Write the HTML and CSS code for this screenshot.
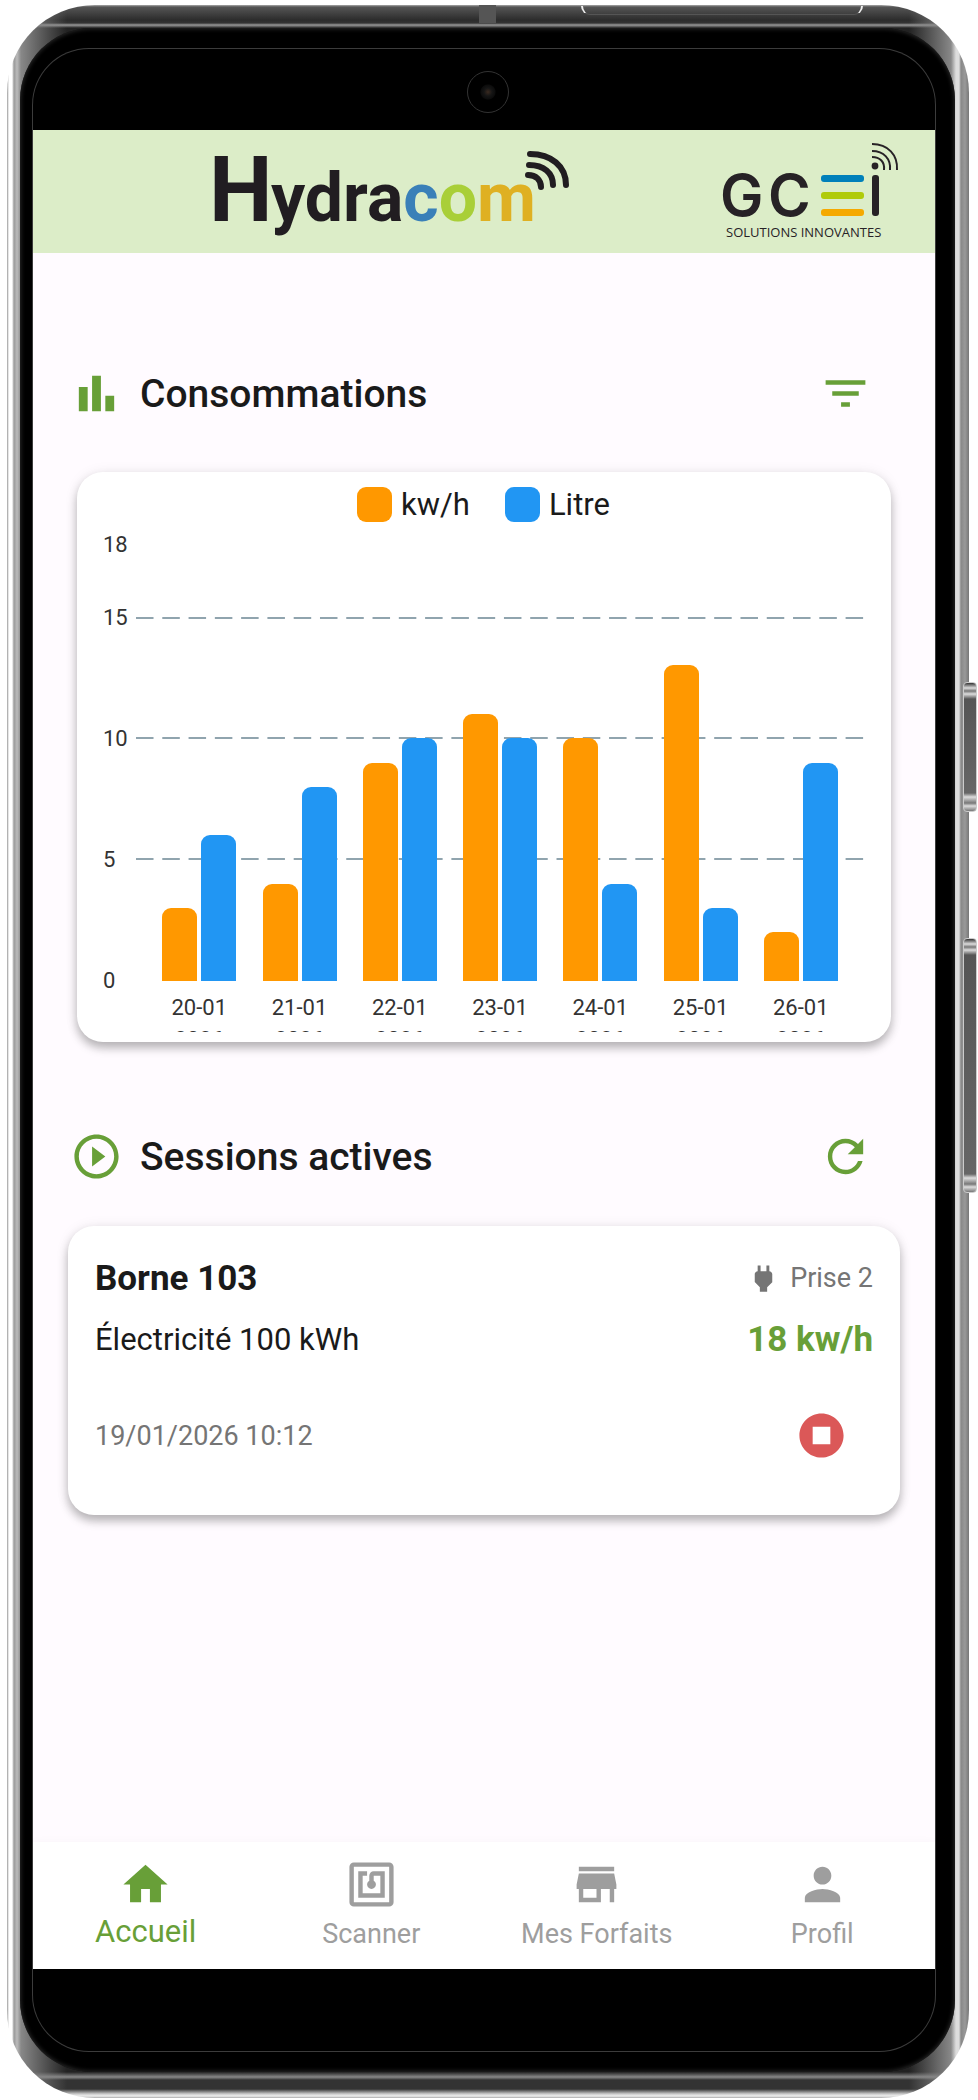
FILE: index.html
```html
<!DOCTYPE html>
<html lang="fr">
<head>
    <meta charset="UTF-8">
    <meta name="viewport" content="width=device-width, initial-scale=1.0">
    <title>Hydracom</title>
    <link rel="stylesheet" href="styles.css">
</head>
<body>
    <div class="phone">
        <span class="side-button power"></span>
        <span class="side-button volume"></span>
        <span class="antenna"></span>
        <span class="speaker"></span>
        <div class="bezel">
            <div class="glass">
                <div class="camera-area"><span class="camera"></span></div>

                <div class="screen">
                    <header class="app-header">
                        <svg class="logo-hydracom" width="360" height="100" viewBox="0 0 360 100" role="img" aria-label="Hydracom">
                            <text class="logo-cap" x="-1" y="79">H</text>
                            <text class="logo-word" x="61" y="79">ydra<tspan fill="#3a80b8">c</tspan><tspan fill="#a9cf38">o</tspan><tspan fill="#dfb022">m</tspan></text>
                            <g fill="none" stroke="#211d21" stroke-width="6" stroke-linecap="round">
                                <path d="M320 12c21 0 36 12 36 31"/>
                                <path d="M319 23c15 0 24 8 24 20"/>
                                <path d="M318 33c8 0 13 5 13 12"/>
                            </g>
                        </svg>
                        <svg class="logo-gcei" width="190" height="105" viewBox="0 0 190 105" role="img" aria-label="GCEi Solutions innovantes">
                            <text class="gcei-letters" y="77"><tspan x="5">G</tspan><tspan x="53">C</tspan></text>
                            <rect x="106" y="36" width="43" height="7" rx="3" fill="#0080ba"/>
                            <rect x="106" y="53" width="43" height="7" rx="3" fill="#b0cb0a"/>
                            <rect x="106" y="70" width="43" height="7" rx="3" fill="#f5a900"/>
                            <rect x="157" y="36" width="7" height="41" rx="3" fill="#272226"/>
                            <circle cx="160" cy="27" r="3.4" fill="#272226"/>
                            <g fill="none" stroke="#272226" stroke-width="2">
                                <path d="M157 18c8 0 13 5 12 13"/>
                                <path d="M157 12c12 0 19 8 18 19"/>
                                <path d="M157 5c16 0 26 11 25 26"/>
                            </g>
                            <text class="gcei-tagline" x="11" y="98">SOLUTIONS INNOVANTES</text>
                        </svg>
                    </header>

                    <main class="content">
                        <div class="section-head">
                            <svg class="icon" viewBox="0 0 24 24"><path d="M4 9h4v11H4zM16 13h4v7h-4zM10 4h4v16h-4z"/></svg>
                            <h2>Consommations</h2>
                            <button type="button" class="icon-button" aria-label="Filtrer">
                                <svg class="icon" viewBox="0 0 24 24"><path d="M10 18h4v-2h-4v2zM3 6v2h18V6H3zm3 7h12v-2H6v2z"/></svg>
                            </button>
                        </div>

                        <section class="card chart-card">
                            <div class="legend">
                                <span class="legend-item"><i class="swatch kwh"></i>kw/h</span>
                                <span class="legend-item"><i class="swatch litre"></i>Litre</span>
                            </div>
                            <div class="chart">
                                <div class="axis">
                                    <span style="flex-grow: 3">18</span>
                                    <span style="flex-grow: 5">15</span>
                                    <span style="flex-grow: 5">10</span>
                                    <span style="flex-grow: 5">5</span>
                                    <span>0</span>
                                </div>
                                <div class="plot">
                                    <div class="group"><div class="bar kwh" style="height: 16.67%"></div><div class="bar litre" style="height: 33.33%"></div></div>
                                    <div class="group"><div class="bar kwh" style="height: 22.22%"></div><div class="bar litre" style="height: 44.44%"></div></div>
                                    <div class="group"><div class="bar kwh" style="height: 50%"></div><div class="bar litre" style="height: 55.56%"></div></div>
                                    <div class="group"><div class="bar kwh" style="height: 61.11%"></div><div class="bar litre" style="height: 55.56%"></div></div>
                                    <div class="group"><div class="bar kwh" style="height: 55.56%"></div><div class="bar litre" style="height: 22.22%"></div></div>
                                    <div class="group"><div class="bar kwh" style="height: 72.22%"></div><div class="bar litre" style="height: 16.67%"></div></div>
                                    <div class="group"><div class="bar kwh" style="height: 11.11%"></div><div class="bar litre" style="height: 50%"></div></div>
                                </div>
                                <div class="dates">
                                    <span>20-01<br>2026</span>
                                    <span>21-01<br>2026</span>
                                    <span>22-01<br>2026</span>
                                    <span>23-01<br>2026</span>
                                    <span>24-01<br>2026</span>
                                    <span>25-01<br>2026</span>
                                    <span>26-01<br>2026</span>
                                </div>
                            </div>
                        </section>

                        <div class="section-head sessions-head">
                            <svg class="icon" viewBox="0 0 24 24"><path d="M10 16.500l6-4.500-6-4.500v9zM12 2C6.480 2 2 6.480 2 12s4.480 10 10 10 10-4.480 10-10S17.520 2 12 2zm0 18c-4.410 0-8-3.590-8-8s3.590-8 8-8 8 3.590 8 8-3.590 8-8 8z"/></svg>
                            <h2>Sessions actives</h2>
                            <button type="button" class="icon-button" aria-label="Actualiser">
                                <svg class="icon" viewBox="0 0 24 24"><path d="M17.650 6.350C16.200 4.900 14.210 4 12 4c-4.420 0-7.990 3.580-7.990 8s3.570 8 7.990 8c3.730 0 6.840-2.550 7.730-6h-2.080c-.82 2.330-3.040 4-5.650 4-3.310 0-6-2.690-6-6s2.690-6 6-6c1.660 0 3.140.69 4.220 1.780L13 11h7V4l-2.350 2.350z"/></svg>
                            </button>
                        </div>

                        <section class="card session">
                            <div class="row row-title">
                                <h3>Borne 103</h3>
                                <span class="plug">
                                    <svg viewBox="0 0 24 24"><path d="M16.010 7L16 3h-2v4h-4V3H8v4h-.01C7 6.990 6 7.990 6 8.990v5.490L9.500 18v3h5v-3l3.500-3.510v-5.500c0-1-1-2-1.990-1.990z"/></svg>
                                    Prise 2
                                </span>
                            </div>
                            <div class="row row-plan">
                                <span>Électricité 100 kWh</span>
                                <strong>18 kw/h</strong>
                            </div>
                            <div class="row row-date">
                                <time datetime="2026-01-19T10:12">19/01/2026 10:12</time>
                                <button type="button" class="icon-button stop" aria-label="Arrêter">
                                    <svg class="icon" viewBox="0 0 24 24"><path d="M12 2C6.480 2 2 6.480 2 12s4.480 10 10 10 10-4.480 10-10S17.520 2 12 2zm4 14H8V8h8v8z"/></svg>
                                </button>
                            </div>
                        </section>
                    </main>

                    <nav class="tabs">
                        <a href="#accueil" class="active">
                            <svg class="icon" viewBox="0 0 24 24"><path d="M10 20v-6h4v6h5v-8h3L12 3 2 12h3v8z"/></svg>
                            Accueil
                        </a>
                        <a href="#scanner">
                            <svg class="icon" viewBox="0 0 24 24"><path d="M20 2H4c-1.100 0-2 .9-2 2v16c0 1.100.9 2 2 2h16c1.100 0 2-.9 2-2V4c0-1.100-.9-2-2-2zm0 18H4V4h16v16zM18 6h-5c-1.100 0-2 .9-2 2v2.280c-.6.350-1 .980-1 1.720 0 1.100.9 2 2 2s2-.9 2-2c0-.740-.4-1.380-1-1.720V8h3v8H8V8h2V6H6v12h12V6z"/></svg>
                            Scanner
                        </a>
                        <a href="#forfaits">
                            <svg class="icon" viewBox="0 0 24 24"><path d="M20 4H4v2h16V4zm1 10v-2l-1-5H4l-1 5v2h1v6h10v-6h4v6h2v-6h1zm-9 4H6v-4h6v4z"/></svg>
                            Mes Forfaits
                        </a>
                        <a href="#profil">
                            <svg class="icon" viewBox="0 0 24 24"><path d="M12 12c2.210 0 4-1.790 4-4s-1.790-4-4-4-4 1.790-4 4 1.790 4 4 4zm0 2c-2.670 0-8 1.340-8 4v2h16v-2c0-2.660-5.330-4-8-4z"/></svg>
                            Profil
                        </a>
                    </nav>
                </div>
                <div class="chin"></div>
            </div>
        </div>
    </div>
</body>
</html>
```
FILE: styles.css
```css
* {
    box-sizing: border-box;
}

body {
    margin: 0;
    padding: 5px 9px 2px 7px;
    background: #fff;
    color: #1a1a1a;
    font-family: Roboto, Arial, sans-serif;
    font-size: 31px;
}

/* Phone body */

.phone {
    position: relative;
    display: flex;
    min-height: calc(100vh - 7px);
    padding: 23px 14px 26px 13px;
    border-radius: 88px;
    background:
        linear-gradient(to right, #999 0, #fff 2px, #fff 5px, #999 7px, #bbb 10px, #888 14px, transparent 60px),
        linear-gradient(to left, #777 0, #999 4px, #888 8px, #ddd 10px, #ddd 13px, #888 18px, transparent 60px),
        linear-gradient(#aaa 0, #555 2px, #2c2c2c 15px, #333 18px, #999 20px, #222 23px, #222 calc(100% - 26px), #888 calc(100% - 21px), #333 calc(100% - 18px), #333 calc(100% - 9px), #ccc calc(100% - 4px), #eee calc(100% - 2px), #aaa 100%);
}

.side-button {
    position: absolute;
    right: -8px;
    width: 14px;
    border: 1px solid #ccc;
    border-radius: 4px;
    background: linear-gradient(#333 0, #ddd 5px, #777 8px, #ddd 11px, #555 16px, #666 calc(100% - 18px), #ddd calc(100% - 14px), #777 calc(100% - 8px), #ddd calc(100% - 5px), #777 100%);
}

.power {
    top: 677px;
    height: 130px;
}

.volume {
    top: 933px;
    height: 255px;
}

.antenna {
    position: absolute;
    top: 0;
    left: 472px;
    width: 17px;
    height: 18px;
    background: #555;
}

.speaker {
    position: absolute;
    top: 1px;
    right: 106px;
    width: 282px;
    height: 9px;
    border: solid #eee;
    border-width: 0 2px 1px;
    border-bottom-color: #555;
    border-radius: 0 0 16px 16px;
}

.bezel {
    display: flex;
    flex: 1;
    padding: 21px 20px 21px 13px;
    border-radius: 72px;
    background: #000;
    box-shadow: inset 0 0 4px 1px #2a2a2a;
}

.glass {
    display: flex;
    flex: 1;
    flex-direction: column;
    min-width: 0;
    border-radius: 56px;
    background: #000;
    box-shadow: 0 0 0 1px #3c3c3c;
}

.camera-area {
    display: flex;
    align-items: center;
    justify-content: center;
    height: 81px;
    padding: 4px 0 0 8px;
}

.camera {
    width: 42px;
    height: 42px;
    border: 1px solid #333;
    border-radius: 50%;
    background: radial-gradient(#3a2a20 0, #151515 4px, #0c0c0c 7px, #000 8px);
}

.chin {
    height: 82px;
}

/* App */

.screen {
    display: flex;
    flex: 1;
    flex-direction: column;
    background: #fffbff;
}

.app-header {
    display: flex;
    align-items: center;
    justify-content: space-between;
    height: 123px;
    padding: 0 30px 0 177px;
    background: #dcedc8;
}

.app-header svg {
    overflow: visible;
}

.logo-cap {
    fill: #211d21;
    font-size: 90px;
    font-weight: 700;
}

.logo-word {
    fill: #211d21;
    font-size: 68px;
    font-weight: 700;
}

.gcei-letters {
    fill: #272226;
    font-family: Inter, sans-serif;
    font-size: 58px;
    font-weight: 600;
}

.gcei-tagline {
    fill: #272226;
    font-family: "Open Sans", sans-serif;
    font-size: 13px;
}

.content {
    flex: 1;
    padding: 114px 35px 52px;
}

.icon {
    display: block;
    width: 53px;
    height: 53px;
    fill: currentColor;
}

.icon-button {
    padding: 0;
    border: none;
    background: none;
    color: #689f38;
    cursor: pointer;
}

.section-head {
    display: flex;
    align-items: center;
    padding: 0 28px 0 2px;
    color: #689f38;
}

.section-head h2 {
    flex: 1;
    margin: 0 0 0 17px;
    color: #1a1a1a;
    font-size: 39px;
    font-weight: 500;
    line-height: 52px;
}

.sessions-head {
    margin-top: 88px;
}

.card {
    border-radius: 26px;
    background: #fff;
    box-shadow: 0 6px 10px rgba(0, 0, 0, 0.26), 0 1px 14px rgba(0, 0, 0, 0.08);
}

.chart-card {
    margin: 52px 9px 0;
    padding: 15px 27px 10px 26px;
}

.legend {
    display: flex;
    justify-content: center;
    gap: 35px;
    margin-bottom: 22px;
}

.legend-item {
    display: flex;
    align-items: center;
    gap: 9px;
    line-height: 35px;
}

.swatch {
    width: 35px;
    height: 35px;
    border-radius: 9px;
}

.kwh {
    background: #ff9800;
}

.litre {
    background: #2196f3;
}

.chart {
    display: grid;
    grid-template-columns: 33px 1fr;
    color: #333;
    font-size: 22px;
}

.axis {
    display: flex;
    flex-direction: column;
    padding-top: 1px;
    line-height: 0;
}

.plot {
    --dash: linear-gradient(to right, #90a4ae 18px, transparent 18px);
    display: flex;
    align-items: flex-end;
    justify-content: space-evenly;
    height: 437px;
    background: var(--dash) 0 16.67%, var(--dash) 0 44.44%, var(--dash) 0 72.22%;
    background-size: calc((100% - 18px) / 27) 2px;
    background-repeat: repeat-x;
}

.group {
    display: flex;
    align-items: flex-end;
    gap: 4px;
    height: 100%;
}

.bar {
    width: 35px;
    border-radius: 9px 9px 0 0;
}

/* the year line is cut by the bottom of the chart */
.dates {
    grid-column: 2;
    display: flex;
    justify-content: space-evenly;
    height: 40px;
    margin-top: 11px;
    overflow: hidden;
    line-height: 32px;
    text-align: center;
}

.dates span {
    width: 74px;
}

/* Session card */

.session {
    margin-top: 43px;
    padding: 26px 27px 53px;
}

.row {
    display: flex;
    align-items: center;
    justify-content: space-between;
}

.row-title {
    height: 52px;
}

.row-title h3 {
    margin: 0;
    font-size: 35px;
    font-weight: 700;
}

.plug {
    display: flex;
    align-items: center;
    gap: 9px;
    color: #757575;
    font-size: 27px;
}

.plug svg {
    width: 35px;
    height: 35px;
    fill: currentColor;
}

.row-plan {
    margin: 18px 0 51px;
    line-height: 36px;
}

.row-plan strong {
    color: #689f38;
    font-size: 35px;
    font-weight: 700;
}

.row-date {
    padding-right: 25px;
    color: #757575;
    font-size: 27px;
}

.stop {
    color: #db5858;
}

/* Bottom navigation */

.tabs {
    display: grid;
    grid-template-columns: repeat(4, 1fr);
    height: 127px;
    padding-top: 16px;
    background: #fff;
    box-shadow: 0 -2px 8px rgba(0, 0, 0, 0.02);
}

.tabs a {
    display: flex;
    flex-direction: column;
    align-items: center;
    color: #9e9e9e;
    font-size: 27px;
    line-height: 46px;
    text-decoration: none;
}

.tabs .active {
    color: #689f38;
    font-size: 31px;
    line-height: 42px;
}
```
